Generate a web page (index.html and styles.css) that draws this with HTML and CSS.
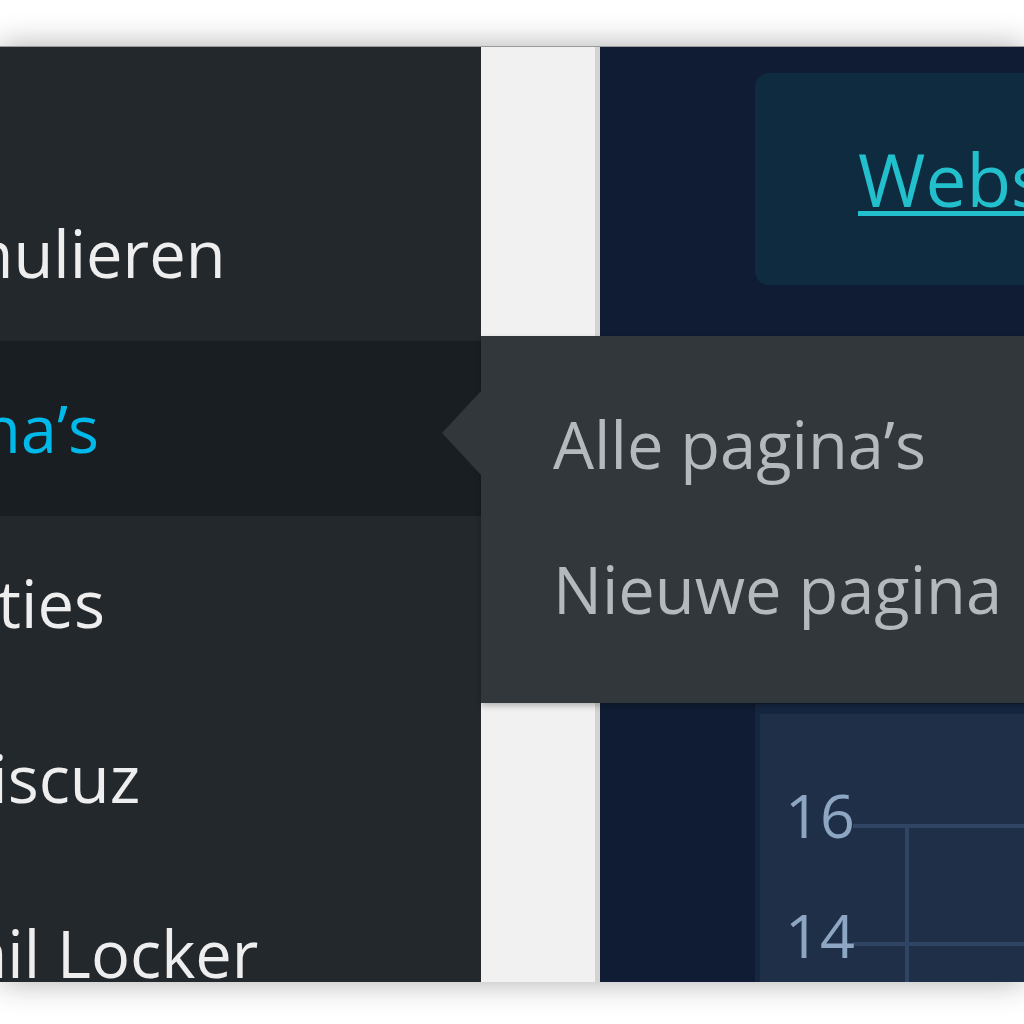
FILE: index.html
```html
<!DOCTYPE html>
<html lang="nl">
<head>
<meta charset="utf-8">
<title>Pagina's</title>
<link rel="stylesheet" href="styles.css">
</head>
<body>
<div class="frame">
  <nav class="sidebar">
    <div class="menu-top"></div>
    <div class="menu-item"><span class="menu-name">Formulieren</span></div>
    <div class="menu-item active">
      <span class="menu-name">Pagina’s</span>
      <div class="flyout">
        <span class="flyout-arrow"></span>
        <a class="flyout-link">Alle pagina’s</a>
        <a class="flyout-link">Nieuwe pagina</a>
      </div>
    </div>
    <div class="menu-item"><span class="menu-name">Reacties</span></div>
    <div class="menu-item"><span class="menu-name">wpDiscuz</span></div>
    <div class="menu-item"><span class="menu-name">E-mail Locker</span></div>
  </nav>
  <div class="strip"></div>
  <main class="main">
    <div class="card"><a class="card-link">Website bekijken</a></div>
    <div class="chart">
      <svg class="chart-svg" width="269" height="279" viewBox="0 0 269 279">
        <line x1="98" y1="122" x2="269" y2="122" class="grid"/>
        <line x1="98" y1="240" x2="269" y2="240" class="grid"/>
        <line x1="152" y1="120" x2="152" y2="279" class="grid"/>
        <text x="30" y="134" class="tick">16</text>
        <text x="30" y="254" class="tick">14</text>
      </svg>
    </div>
  </main>
</div>
</body>
</html>
```

FILE: styles.css
```css
html, body {
  margin: 0;
  padding: 0;
  background: #ffffff;
  overflow: hidden;
  width: 1024px;
  height: 1024px;
}

.frame {
  margin-top: 46px;
  height: 936px;
  width: 1024px;
  display: flex;
  overflow: hidden;
  border-top: 1px solid #9a9a9a;
  box-sizing: border-box;
  box-shadow: 0 0 30px rgba(0, 0, 0, 0.32);
  font-family: "Open Sans", "Noto Sans", sans-serif;
}

.sidebar {
  width: 481px;
  flex: none;
  background: #23282d;
  display: flex;
  flex-direction: column;
  position: relative;
  z-index: 2;
}

.menu-top {
  height: 119px;
  flex: none;
}

.menu-item {
  height: 175px;
  flex: none;
  line-height: 175px;
  font-size: 65px;
  color: #eeeeee;
  white-space: nowrap;
  position: relative;
}

.menu-name {
  display: block;
  margin-left: -146px;
}

.menu-item.active {
  background: #191e23;
  color: #00b9eb;
}

.flyout {
  position: absolute;
  left: 100%;
  top: -5px;
  width: 560px;
  height: 367px;
  box-sizing: border-box;
  padding: 36px 0 41px 72px;
  background: #32373c;
  box-shadow: 0 3px 6px rgba(0, 0, 0, 0.25);
  display: flex;
  flex-direction: column;
}

.flyout-arrow {
  position: absolute;
  right: 100%;
  top: 55px;
  width: 0;
  height: 0;
  border-top: 42px solid transparent;
  border-bottom: 42px solid transparent;
  border-right: 39px solid #32373c;
}

.flyout-link {
  font-size: 65px;
  line-height: 145px;
  color: #b4b9be;
}

.strip {
  width: 114px;
  flex: none;
  background: #f1f1f1;
  border-right: 5px solid #d3d3d3;
}

.main {
  flex: 1;
  background: #0f1c33;
  display: flex;
  flex-direction: column;
  padding: 26px 0 0 155px;
  min-width: 0;
}

.card {
  height: 212px;
  flex: none;
  background: #0f2b40;
  border-radius: 14px 0 0 14px;
  padding-left: 103px;
  line-height: 212px;
  white-space: nowrap;
  overflow: hidden;
}

.card-link {
  font-size: 73px;
  color: #22c0cc;
  text-decoration: underline;
  text-decoration-thickness: 5px;
  text-underline-offset: 4px;
}

.chart {
  margin-top: 419px;
  flex: 1;
  background: #1f2f47;
  border-top: 10px solid #152640;
  border-left: 5px solid #152640;
  overflow: hidden;
}

.chart-svg {
  display: block;
  margin: -10px 0 0 -5px;
}

.grid {
  stroke: #2f4563;
  stroke-width: 4;
}

.tick {
  font-family: "Open Sans", "Noto Sans", sans-serif;
  font-size: 61px;
  fill: #8ca6c4;
}
```
